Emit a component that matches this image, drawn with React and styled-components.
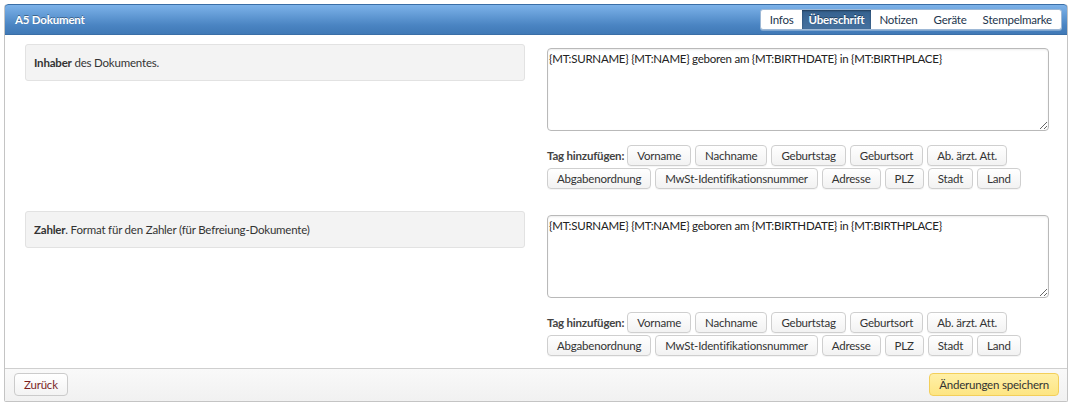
import React from "react";
import styled, { createGlobalStyle } from "styled-components";

const GlobalStyle = createGlobalStyle`
  body {
    margin: 0;
    background: #fff;
    font-family: Lato, "Open Sans", "Liberation Sans", sans-serif;
    font-size: 11.5px;
    letter-spacing: -0.2px;
    color: #333;
  }
`;

const Page = styled.div`
  padding: 4px 9px 2px 4px;
`;

const Panel = styled.div`
  border: 1px solid #c4c4c4;
  border-top: none;
  border-radius: 4px 4px 2px 2px;
  overflow: hidden;
`;

const Header = styled.div`
  height: 31px;
  box-sizing: border-box;
  display: flex;
  align-items: center;
  justify-content: space-between;
  padding: 0 5px 0 10px;
  background: linear-gradient(#7cb2e9, #4a84c2 70%, #4079b6);
  border: 1px solid #3a6ea6;
  border-radius: 4px 4px 0 0;
  margin: 0 -1px;
`;

const Title = styled.div`
  color: #fff;
  font-weight: 700;
  text-shadow: 0 -1px 0 rgba(0, 0, 0, 0.35);
`;

const Tabs = styled.div`
  display: flex;
  height: 19px;
  background: #fff;
  border: 1px solid #9db8d6;
  border-radius: 3px;
  padding: 0 1px;
  box-shadow: 0 1px 0 rgba(255, 255, 255, 0.3);
`;

const Tab = styled.div`
  display: flex;
  align-items: center;
  padding: 0 ${(p) => (p.$active ? "7px" : "8px")};
  color: ${(p) => (p.$active ? "#fff" : "#22354d")};
  font-weight: ${(p) => (p.$active ? 700 : 400)};
  background: ${(p) => (p.$active ? "linear-gradient(#35618f, #45719f)" : "transparent")};
  box-shadow: ${(p) => (p.$active ? "inset 0 1px 2px rgba(0,0,0,0.4)" : "none")};
  text-shadow: ${(p) => (p.$active ? "0 -1px 0 rgba(0,0,0,0.4)" : "none")};
`;

const Body = styled.div`
  padding: 9px 18px 12px 20px;
  display: flex;
  flex-direction: column;
  gap: 22px;
`;

const Section = styled.div`
  display: grid;
  grid-template-columns: 500px 502px;
  column-gap: 22px;
  align-items: start;
`;

const LabelBox = styled.div`
  background: #f3f3f3;
  border: 1px solid #e2e2e2;
  border-radius: 3px;
  padding: 9px 8px;
  line-height: 17px;
  color: #333;
`;

const Field = styled.div`
  display: flex;
  flex-direction: column;
  padding-top: 4px;
`;

const TextArea = styled.textarea`
  height: 83px;
  box-sizing: border-box;
  width: 100%;
  resize: vertical;
  border: 1px solid #b9b9b9;
  border-radius: 4px;
  padding: 2px 1px;
  font-family: inherit;
  font-size: 11.5px;
  letter-spacing: -0.25px;
  line-height: 16px;
  color: #222;
  box-shadow: inset 0 1px 2px rgba(0, 0, 0, 0.08);
  outline: none;
`;

const Tags = styled.div`
  margin-top: 14px;
  display: flex;
  flex-direction: column;
  gap: 2px;
`;

const TagRow = styled.div`
  display: flex;
  align-items: center;
  gap: 4px;
`;

const TagLabel = styled.span`
  font-weight: 700;
  color: #444;
  margin-right: -1px;
`;

const TagButton = styled.button`
  height: 21px;
  flex-shrink: 0;
  padding: 0 9px;
  border: 1px solid #cfcfcf;
  border-radius: 4px;
  background: linear-gradient(#fff, #f2f2f2);
  font-family: inherit;
  font-size: 11.5px;
  letter-spacing: -0.2px;
  white-space: nowrap;
  color: #333;
  box-shadow: 0 1px 0 rgba(0, 0, 0, 0.04);
`;

const Footer = styled.div`
  display: flex;
  justify-content: space-between;
  align-items: center;
  padding: 4px 8px 5px 9px;
  border-top: 1px solid #cfcfcf;
  background: linear-gradient(#f9f9f9, #f1f1f1);
`;

const Button = styled.button`
  height: 23px;
  padding: 0 9px;
  border-radius: 4px;
  font-family: inherit;
  font-size: 11.5px;
  letter-spacing: -0.2px;
  border: 1px solid ${(p) => (p.$primary ? "#f3cf5a" : "#cbcbcb")};
  background: ${(p) =>
    p.$primary ? "linear-gradient(#fff0a8, #fde583)" : "linear-gradient(#fff, #f3f3f3)"};
  color: ${(p) => (p.$primary ? "#333" : "#7b1f1f")};
`;

const row1 = ["Vorname", "Nachname", "Geburtstag", "Geburtsort", "Ab. ärzt. Att."];
const row2 = ["Abgabenordnung", "MwSt-Identifikationsnummer", "Adresse", "PLZ", "Stadt", "Land"];
const value = "{MT:SURNAME} {MT:NAME} geboren am {MT:BIRTHDATE} in {MT:BIRTHPLACE}";

const TagPicker = () => (
  <Tags>
    <TagRow>
      <TagLabel>Tag hinzufügen:</TagLabel>
      {row1.map((t) => (
        <TagButton key={t}>{t}</TagButton>
      ))}
    </TagRow>
    <TagRow>
      {row2.map((t) => (
        <TagButton key={t}>{t}</TagButton>
      ))}
    </TagRow>
  </Tags>
);

const sections = [
  { title: "Inhaber", text: " des Dokumentes." },
  { title: "Zahler", text: ". Format für den Zahler (für Befreiung-Dokumente)" },
];

export default function App() {
  return (
    <>
      <GlobalStyle />
      <Page>
        <Panel>
          <Header>
            <Title>A5 Dokument</Title>
            <Tabs>
              <Tab>Infos</Tab>
              <Tab $active>Überschrift</Tab>
              <Tab>Notizen</Tab>
              <Tab>Geräte</Tab>
              <Tab>Stempelmarke</Tab>
            </Tabs>
          </Header>
          <Body>
            {sections.map((s) => (
              <Section key={s.title}>
                <LabelBox>
                  <b>{s.title}</b>
                  {s.text}
                </LabelBox>
                <Field>
                  <TextArea defaultValue={value} />
                  <TagPicker />
                </Field>
              </Section>
            ))}
          </Body>
          <Footer>
            <Button>Zurück</Button>
            <Button $primary>Änderungen speichern</Button>
          </Footer>
        </Panel>
      </Page>
    </>
  );
}
